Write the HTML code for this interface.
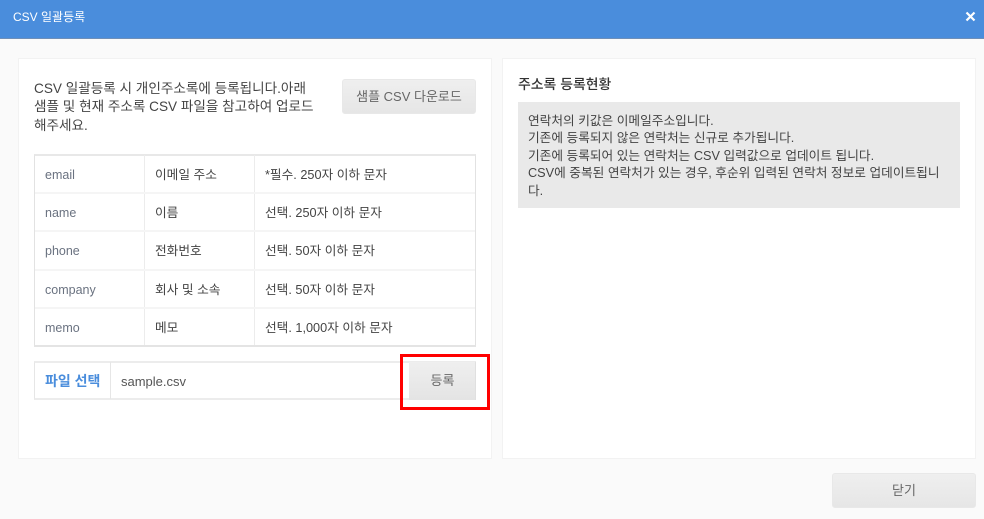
<!DOCTYPE html>
<html lang="ko">
<head>
<meta charset="utf-8">
<title>CSV 일괄등록</title>
<style>
html,body{margin:0;padding:0;}
body{width:984px;height:519px;position:relative;overflow:hidden;background:#fafafa;font-family:"Liberation Sans","Noto Sans CJK KR",sans-serif;font-size:12.7px;color:#444;}
.a{position:absolute;}
.t{position:absolute;white-space:nowrap;line-height:18px;}
.panel{position:absolute;background:#fff;border:1px solid #f2f2f2;box-sizing:border-box;}
.btn{position:absolute;box-sizing:border-box;background:linear-gradient(#efefef,#e6e6e6);border:1px solid #e8e8e8;border-radius:3px;color:#666;text-align:center;font-size:13px;}
.k{color:#6a7280;font-size:12.5px;}
.p{font-size:13.6px;color:#444;}
.r{font-size:12.7px;color:#444;}
</style>
</head>
<body>
<div class="a" style="left:0;top:0;width:984px;height:38px;background:#4a8ddc;border-bottom:1px solid #6f8fb8;"></div>
<div class="t" style="left:13px;top:8px;color:#fff;font-size:12px;">CSV 일괄등록</div>
<svg class="a" style="left:964px;top:10px" width="13" height="13" viewBox="0 0 13 13"><path d="M2.5 2.5L10.5 10.5M10.5 2.5L2.5 10.5" stroke="#fff" stroke-width="2.2" fill="none"/></svg>

<div class="panel" style="left:18px;top:58px;width:474px;height:401px;"></div>
<div class="panel" style="left:502px;top:58px;width:474px;height:401px;"></div>

<div class="t p" style="left:34px;top:80px;">CSV 일괄등록 시 개인주소록에 등록됩니다.아래</div>
<div class="t p" style="left:34px;top:98px;">샘플 및 현재 주소록 CSV 파일을 참고하여 업로드</div>
<div class="t p" style="left:34px;top:117px;">해주세요.</div>
<div class="btn" style="left:342px;top:79px;width:134px;height:35px;line-height:33px;">샘플 CSV 다운로드</div>

<div class="a" style="left:34px;top:154px;width:442px;height:193px;box-sizing:border-box;border:1px solid #e2e2e2;border-top:2px solid #e8e8e8;border-bottom:2px solid #e4e4e4;"></div>
<div class="a" style="left:144px;top:155px;width:1px;height:190px;background:#ececec;"></div>
<div class="a" style="left:254px;top:155px;width:1px;height:190px;background:#ececec;"></div>
<div class="a" style="left:35px;top:192px;width:440px;height:2px;background:#f5f5f5;"></div>
<div class="a" style="left:35px;top:230px;width:440px;height:2px;background:#f5f5f5;"></div>
<div class="a" style="left:35px;top:269px;width:440px;height:2px;background:#f5f5f5;"></div>
<div class="a" style="left:35px;top:307px;width:440px;height:2px;background:#f5f5f5;"></div>

<div class="t k" style="left:45px;top:166px;">email</div>
<div class="t" style="left:155px;top:166px;">이메일 주소</div>
<div class="t" style="left:265px;top:166px;">*필수. 250자 이하 문자</div>
<div class="t k" style="left:45px;top:204px;">name</div>
<div class="t" style="left:155px;top:204px;">이름</div>
<div class="t" style="left:265px;top:204px;">선택. 250자 이하 문자</div>
<div class="t k" style="left:45px;top:242px;">phone</div>
<div class="t" style="left:155px;top:242px;">전화번호</div>
<div class="t" style="left:265px;top:242px;">선택. 50자 이하 문자</div>
<div class="t k" style="left:45px;top:281px;">company</div>
<div class="t" style="left:155px;top:281px;">회사 및 소속</div>
<div class="t" style="left:265px;top:281px;">선택. 50자 이하 문자</div>
<div class="t k" style="left:45px;top:319px;">memo</div>
<div class="t" style="left:155px;top:319px;">메모</div>
<div class="t" style="left:265px;top:319px;">선택. 1,000자 이하 문자</div>

<div class="a" style="left:34px;top:361px;width:442px;height:39px;box-sizing:border-box;border:1px solid #e6e6e6;border-top:2px solid #ececec;border-bottom:2px solid #ececec;background:#fff;"></div>
<div class="a" style="left:110px;top:362px;width:1px;height:37px;background:#e6e6e6;"></div>
<div class="t" style="left:45px;top:372px;color:#4a8ddc;font-size:14px;font-weight:bold;">파일 선택</div>
<div class="t" style="left:121px;top:373px;font-size:13px;color:#555;">sample.csv</div>
<div class="a" style="left:409px;top:362px;width:67px;height:38px;background:linear-gradient(#efefef,#e4e4e4);border-right:1px solid #e0e0e0;box-sizing:border-box;"></div>
<div class="t" style="left:409px;top:372px;width:67px;text-align:center;color:#666;font-size:13px;">등록</div>
<div class="a" style="left:400px;top:354px;width:90px;height:56px;box-sizing:border-box;border:3px solid #f00;"></div>

<div class="t" style="left:518px;top:75px;font-size:13.9px;font-weight:500;color:#333;">주소록 등록현황</div>
<div class="a" style="left:518px;top:102px;width:442px;height:106px;background:#e9e9e9;"></div>
<div class="t r" style="left:528px;top:112px;">연락처의 키값은 이메일주소입니다.</div>
<div class="t r" style="left:528px;top:129px;">기존에 등록되지 않은 연락처는 신규로 추가됩니다.</div>
<div class="t r" style="left:528px;top:147px;">기존에 등록되어 있는 연락처는 CSV 입력값으로 업데이트 됩니다.</div>
<div class="t r" style="left:528px;top:164px;">CSV에 중복된 연락처가 있는 경우, 후순위 입력된 연락처 정보로 업데이트됩니</div>
<div class="t r" style="left:528px;top:182px;">다.</div>

<div class="btn" style="left:832px;top:473px;width:144px;height:35px;line-height:33px;">닫기</div>
</body>
</html>
